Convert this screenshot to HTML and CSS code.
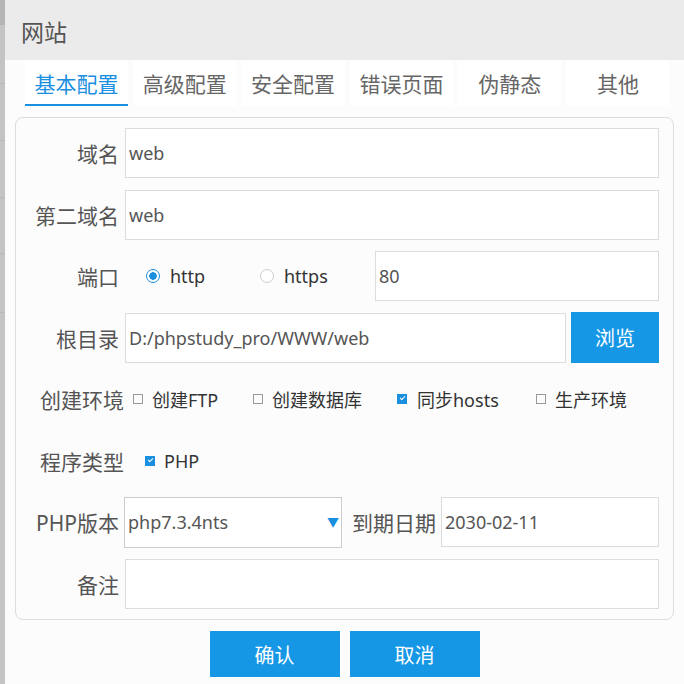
FILE: index.html
```html
<!DOCTYPE html>
<html lang="zh-CN">
<head>
    <meta charset="UTF-8">
    <title>网站</title>
    <link rel="stylesheet" href="styles.css">
</head>
<body>
    <div class="side-strip"></div>

    <div class="dialog">
        <div class="dialog-header">网站</div>

        <div class="tabs">
            <div class="tab active">基本配置</div>
            <div class="tab">高级配置</div>
            <div class="tab">安全配置</div>
            <div class="tab">错误页面</div>
            <div class="tab">伪静态</div>
            <div class="tab">其他</div>
        </div>

        <div class="panel">
            <div class="form-row">
                <label class="row-label">域名</label>
                <input class="text-input" type="text" value="web">
            </div>

            <div class="form-row">
                <label class="row-label">第二域名</label>
                <input class="text-input" type="text" value="web">
            </div>

            <div class="form-row">
                <label class="row-label">端口</label>
                <div class="radio-group">
                    <span class="radio checked"></span><span class="opt-text">http</span>
                </div>
                <div class="radio-group">
                    <span class="radio"></span><span class="opt-text">https</span>
                </div>
                <input class="text-input port-input" type="text" value="80">
            </div>

            <div class="form-row">
                <label class="row-label">根目录</label>
                <input class="text-input" type="text" value="D:/phpstudy_pro/WWW/web">
                <button class="btn browse-btn">浏览</button>
            </div>

            <div class="form-row">
                <label class="row-label wide-label">创建环境</label>
                <div class="check-group">
                    <div class="check-item w-ftp"><span class="checkbox"></span>创建FTP</div>
                    <div class="check-item w-db"><span class="checkbox"></span>创建数据库</div>
                    <div class="check-item w-hosts"><span class="checkbox checked"></span>同步hosts</div>
                    <div class="check-item"><span class="checkbox"></span>生产环境</div>
                </div>
            </div>

            <div class="form-row">
                <label class="row-label wide-label">程序类型</label>
                <div class="check-group php-type">
                    <div class="check-item"><span class="checkbox checked"></span>PHP</div>
                </div>
            </div>

            <div class="form-row">
                <label class="row-label">PHP版本</label>
                <div class="select-box">
                    <span>php7.3.4nts</span>
                    <span class="select-arrow">▼</span>
                </div>
                <label class="row-label inline-label">到期日期</label>
                <input class="text-input" type="text" value="2030-02-11">
            </div>

            <div class="form-row">
                <label class="row-label">备注</label>
                <input class="text-input" type="text" value="">
            </div>
        </div>

        <div class="actions">
            <button class="btn action-btn">确认</button>
            <button class="btn action-btn">取消</button>
        </div>
    </div>
</body>
</html>
```

FILE: styles.css
```css
body {
    margin: 0;
    padding: 0;
    height: 684px;
    display: flex;
    font-family: "Noto Sans", "Noto Sans CJK SC", sans-serif;
    color: #555;
    overflow: hidden;
}

/* Window behind the dialog */
.side-strip {
    width: 5px;
    flex-shrink: 0;
    background:
        linear-gradient(#b5b5b5 0, #b5b5b5 25px, transparent 25px),
        linear-gradient(transparent 83px, #b9b9b9 83px, #b9b9b9 84px, transparent 84px,
                        transparent 140px, #b9b9b9 140px, #b9b9b9 141px, transparent 141px,
                        transparent 197px, #b9b9b9 197px, #b9b9b9 198px, transparent 198px,
                        transparent 253px, #b9b9b9 253px, #b9b9b9 254px, transparent 254px,
                        transparent 312px, #b9b9b9 312px, #b9b9b9 313px, transparent 313px),
        #c4c4c4;
}

.dialog {
    flex: 1;
    background: #fcfcfc;
    display: flex;
    flex-direction: column;
}

.dialog-header {
    height: 60px;
    background: #ebebeb;
    padding-left: 16px;
    font-size: 23px;
    line-height: 64px;
    color: #555;
}

/* Tabs */
.tabs {
    display: flex;
    gap: 5.3px;
    padding: 1px 0 0 20px;
}

.tab {
    width: 103px;
    height: 45px;
    background: #fff;
    text-align: center;
    font-size: 21px;
    line-height: 46px;
    color: #666;
    box-sizing: border-box;
}

.tab.active {
    color: #1a8fe0;
    border-bottom: 2px solid #1a8fe0;
}

/* Form panel */
.panel {
    margin: 11px 10px 0 10px;
    height: 503px;
    box-sizing: border-box;
    border: 1px solid #dcdcdc;
    border-radius: 8px;
    padding: 10px 14px 0 0;
    display: flex;
    flex-direction: column;
    gap: 11.5px;
}

.form-row {
    display: flex;
    align-items: center;
    height: 50px;
    flex-shrink: 0;
}

.row-label {
    width: 103px;
    flex-shrink: 0;
    text-align: right;
    font-size: 21px;
    color: #555;
    margin-right: 6px;
}

.wide-label {
    width: 108px;
    margin-right: 0;
}

.inline-label {
    width: auto;
    margin: 0 5px 0 10px;
}

.text-input {
    flex: 1;
    min-width: 0;
    height: 50px;
    box-sizing: border-box;
    border: 1px solid #dcdcdc;
    background: #fff;
    padding: 0 3px;
    font-family: inherit;
    font-size: 18px;
    color: #555;
    outline: none;
}

.port-input {
    flex: none;
    width: 284px;
}

/* Radios */
.radio-group {
    display: flex;
    align-items: center;
    width: 114px;
    padding-left: 21px;
    box-sizing: border-box;
}

.radio-group + .radio-group {
    width: 136px;
}

.radio {
    width: 14px;
    height: 14px;
    border: 1px solid #ccc;
    border-radius: 50%;
    box-sizing: border-box;
    margin-right: 10px;
    background: #fff;
}

.radio.checked {
    border-color: #1a8fe0;
    background: radial-gradient(circle, #1a8fe0 0, #1a8fe0 3.5px, #fff 4px);
}

.opt-text {
    font-size: 18px;
    color: #333;
}

/* Checkboxes */
.check-group {
    display: flex;
    align-items: center;
    padding-left: 9px;
}

.php-type {
    padding-left: 21px;
}

.check-item {
    display: flex;
    align-items: center;
    font-size: 18px;
    color: #333;
}

.w-ftp { width: 120px; }
.w-db { width: 144px; }
.w-hosts { width: 139px; }

.checkbox {
    width: 10px;
    height: 10px;
    border: 1px solid #999;
    box-sizing: border-box;
    margin-right: 9px;
    position: relative;
}

.checkbox.checked {
    border-color: #1a8fe0;
    background: #1a8fe0;
    margin-right: 10px;
}

.check-group.php-type .checkbox.checked {
    margin-right: 9px;
}

.checkbox.checked::after {
    content: "";
    position: absolute;
    left: 2px;
    top: 1px;
    width: 4px;
    height: 2px;
    border-left: 1.5px solid #fff;
    border-bottom: 1.5px solid #fff;
    transform: rotate(-45deg);
}

/* Select */
.select-box {
    width: 218px;
    height: 51px;
    box-sizing: border-box;
    border: 1px solid #ccc;
    background: #fff;
    display: flex;
    align-items: center;
    justify-content: space-between;
    padding: 0 2px 0 3px;
    font-size: 18px;
    color: #555;
    margin-left: -1px;
}

.select-arrow {
    color: #1a8fe0;
    font-size: 12px;
}

/* Buttons */
.btn {
    border: none;
    background: #1697e6;
    color: #fff;
    font-family: inherit;
    font-size: 20px;
    cursor: pointer;
}

.browse-btn {
    width: 88px;
    height: 51px;
    margin-left: 5px;
}

.actions {
    display: flex;
    justify-content: center;
    gap: 10px;
    margin-top: 11px;
}

.action-btn {
    width: 130px;
    height: 46px;
}
```
